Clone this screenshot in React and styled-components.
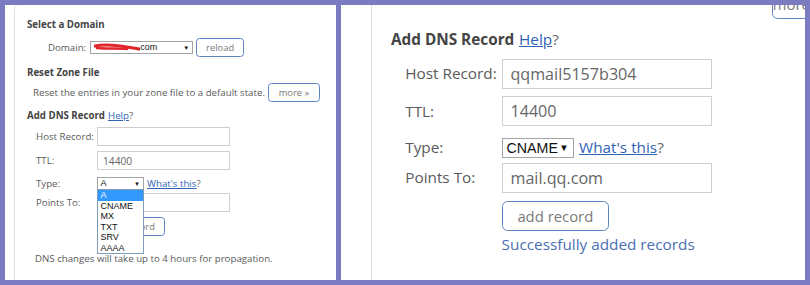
import React from 'react';
import styled, { createGlobalStyle, ThemeProvider } from 'styled-components';

const s = (n) => ({ theme }) => `${n * theme.k}px`;

const GlobalStyle = createGlobalStyle`
  body {
    margin: 0;
    background: #7b7bc1;
    font-family: "Open Sans", "Noto Sans", sans-serif;
  }
`;

const Page = styled.div`
  display: flex;
  gap: 5px;
  height: 285px;
  padding: 5px;
  box-sizing: border-box;
  background: #7b7bc1;
`;

const Panel = styled.section`
  display: flex;
  width: ${(p) => p.$w}px;
  flex: none;
  padding-left: ${(p) => p.$rail}px;
  box-sizing: border-box;
  background: #fff;
  overflow: hidden;
`;

const Card = styled.div`
  flex: 1;
  min-width: 0;
  border-left: 1px solid #dedede;
  border-top-left-radius: ${(p) => (p.$round ? 4 : 0)}px;
  padding-left: ${(p) => p.$inset}px;
  padding-top: ${(p) => p.$top}px;
  color: #5a5a5a;
  font-size: ${s(9.7)};
  line-height: ${s(15)};
`;

const Heading = styled.div`
  margin-top: ${(p) => (p.$mt || 0) * p.theme.k}px;
  font-weight: 700;
  color: #444;
  line-height: ${s(15)};
  white-space: nowrap;
`;

const Link = styled.a`
  font-weight: 400;
  color: #2f63b5;
  text-decoration: underline;
  margin-left: ${s(3)};
`;

const Quiet = styled.span`
  font-weight: 400;
  color: #666;
`;

const Line = styled.div`
  display: flex;
  align-items: ${(p) => p.$align || 'center'};
  height: ${(p) => p.$h * p.theme.k}px;
  margin-top: ${(p) => (p.$mt || 0) * p.theme.k}px;
  padding-left: ${(p) => (p.$indent || 0) * p.theme.k}px;
  white-space: nowrap;
`;

const LineText = styled.span`
  margin-top: ${(p) => -(p.$lift || 0) * p.theme.k}px;
`;

const Field = styled.div`
  display: grid;
  grid-template-columns: ${s(61)} ${s(133)};
  align-items: center;
  height: ${(p) => p.$h * p.theme.k}px;
  margin-top: ${(p) => p.$mt * p.theme.k}px;
  padding-left: ${s(9)};
`;

const Label = styled.span`
  color: #5a5a5a;
  white-space: nowrap;
`;

const Input = styled.input`
  width: 100%;
  height: ${s(19)};
  box-sizing: border-box;
  margin: 0;
  padding: 0 ${s(5)};
  border: 1px solid #cfcfcf;
  border-radius: 0;
  background: #fff;
  font-family: "Open Sans", "Noto Sans", sans-serif;
  font-size: ${s(10.2)};
  color: #666;
  outline: none;
`;

const SelectBox = styled.div`
  position: relative;
  display: flex;
  align-items: center;
  justify-content: space-between;
  width: ${(p) => p.$w * p.theme.k}px;
  height: ${s(13)};
  box-sizing: border-box;
  margin-left: ${(p) => (p.$ml || 0) * p.theme.k}px;
  padding: 0 ${s(3)} 0 ${s(2.5)};
  border: 1px solid #a4a4a4;
  background: #fff;
  font-family: "Liberation Sans", Arial, sans-serif;
  font-size: ${s(9)};
  line-height: 1;
  color: #111;
`;

const Arrow = styled.span`
  font-size: ${s(6)};
  color: #111;
`;

const Chosen = styled.span`
  display: flex;
  align-items: center;
`;

const Menu = styled.ul`
  position: absolute;
  top: 100%;
  left: -1px;
  z-index: 2;
  width: ${(p) => p.$w * p.theme.k}px;
  box-sizing: border-box;
  margin: 0;
  padding: 0;
  list-style: none;
  border: 1px solid #7f9db9;
  background: #fff;
`;

const Option = styled.li`
  height: ${s(10.5)};
  padding-left: ${s(2.5)};
  line-height: ${s(10.5)};
  background: ${(p) => (p.$active ? '#3399ff' : '#fff')};
  color: ${(p) => (p.$active ? '#fff' : '#111')};
`;

const Button = styled.button`
  width: ${(p) => p.$w * p.theme.k}px;
  height: ${s(19)};
  margin: 0 0 0 ${(p) => (p.$ml || 0) * p.theme.k}px;
  padding: 0;
  border: 1px solid #5f84c2;
  border-radius: ${s(3.5)};
  background: #fff;
  font-family: "Open Sans", "Noto Sans", sans-serif;
  font-size: ${s(9.4)};
  color: #7a7a7a;
`;

const Cell = styled.div`
  display: flex;
  align-items: center;
  height: 100%;
`;

const Success = styled.div`
  margin-top: ${s(1.4)};
  padding-left: ${s(70)};
  color: #4a70b3;
  white-space: nowrap;
`;

const Note = styled.div`
  margin-top: ${s(14.5)};
  padding-left: ${s(8)};
  color: #5a5a5a;
  white-space: nowrap;
`;

const Scribble = () => (
  <svg width="46" height="9" viewBox="0 0 46 9" style={{ marginRight: -2 }}>
    <path d="M1 3 C10 1 18 2 26 3 C33 4 39 5 45 6" stroke="#e3262b" strokeWidth="3.2" fill="none" strokeLinecap="round" />
    <path d="M3 5 C14 6 24 5 33 6" stroke="#e3262b" strokeWidth="2.4" fill="none" strokeLinecap="round" />
  </svg>
);

const TYPES = ['A', 'CNAME', 'MX', 'TXT', 'SRV', 'AAAA'];

function DnsRecordForm({ host, type, target, open, done }) {
  return (
    <>
      <Heading $mt={5.5}>
        Add DNS Record<Link>Help</Link>
        <Quiet>?</Quiet>
      </Heading>
      <Field $h={19} $mt={4.5}>
        <Label>Host Record:</Label>
        <Input readOnly value={host} />
      </Field>
      <Field $h={19} $mt={5}>
        <Label>TTL:</Label>
        <Input readOnly value="14400" />
      </Field>
      <Field $h={13} $mt={6}>
        <Label>Type:</Label>
        <Cell>
          <SelectBox $w={open ? 47 : 46}>
            <span>{type}</span>
            <Arrow>▼</Arrow>
            {open && (
              <Menu $w={47}>
                {TYPES.map((t) => (
                  <Option key={t} $active={t === type}>
                    {t}
                  </Option>
                ))}
              </Menu>
            )}
          </SelectBox>
          <Link>What's this</Link>
          <Quiet>?</Quiet>
        </Cell>
      </Field>
      <Field $h={19} $mt={4}>
        <Label>Points To:</Label>
        <Input readOnly value={target} />
      </Field>
      <Field $h={19} $mt={5}>
        <span />
        <Cell>
          <Button $w={68}>add record</Button>
        </Cell>
      </Field>
      {done && <Success>Successfully added records</Success>}
    </>
  );
}

function ResetLine({ mt = 3.5, align, lift }) {
  return (
    <Line $h={19} $mt={mt} $indent={6} $align={align}>
      <LineText $lift={lift}>Reset the entries in your zone file to a default state.</LineText>
      <Button $w={52} $ml={3}>
        more »
      </Button>
    </Line>
  );
}

export default function App() {
  return (
    <>
      <GlobalStyle />
      <Page>
        <ThemeProvider theme={{ k: 1 }}>
          <Panel $w={331} $rail={9}>
            <Card $inset={12} $top={11.5} $round>
              <Heading>Select a Domain</Heading>
              <Line $h={19} $mt={6.5} $indent={21}>
                Domain:
                <SelectBox $w={103} $ml={4}>
                  <Chosen>
                    <Scribble />
                    .com
                  </Chosen>
                  <Arrow>▼</Arrow>
                </SelectBox>
                <Button $w={48} $ml={3}>
                  reload
                </Button>
              </Line>
              <Heading $mt={7.5}>Reset Zone File</Heading>
              <ResetLine />
              <DnsRecordForm host="" type="A" target="" open />
              <Note>DNS changes will take up to 4 hours for propagation.</Note>
            </Card>
          </Panel>
        </ThemeProvider>
        <ThemeProvider theme={{ k: 1.58 }}>
          <Panel $w={464} $rail={30}>
            <Card $inset={19} $top={0}>
              <ResetLine mt={-10.1} align="flex-start" lift={3.4} />
              <DnsRecordForm host="qqmail5157b304" type="CNAME" target="mail.qq.com" done />
            </Card>
          </Panel>
        </ThemeProvider>
      </Page>
    </>
  );
}
